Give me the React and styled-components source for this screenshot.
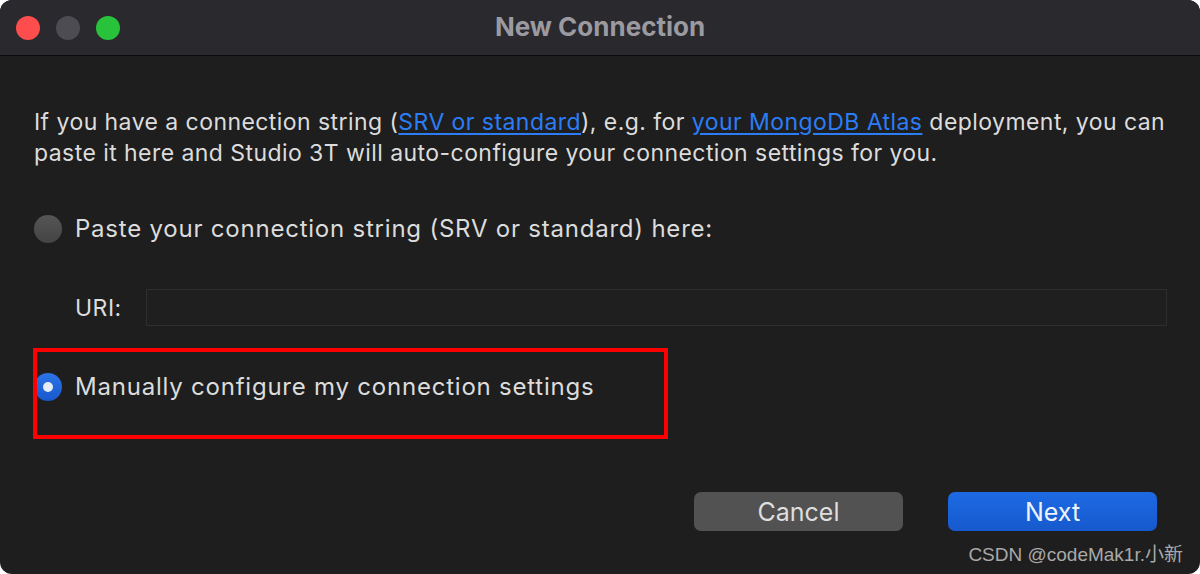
import React, { useState } from 'react'
import styled, { createGlobalStyle } from 'styled-components'

const GlobalStyle = createGlobalStyle`
  html, body { margin: 0; padding: 0; background: #ffffff; }
  body { font-family: Inter, "Noto Sans", sans-serif; }
`

const App = () => {
  const [mode, setMode] = useState('manual')

  return (
    <>
      <GlobalStyle />
      <Window>
        <TitleBar>
          <Lights>
            <Light color="#fe4d4d" />
            <Light color="#4d4c52" />
            <Light color="#29c23b" />
          </Lights>
          <Title>New Connection</Title>
        </TitleBar>
        <Body>
          <Intro>
            If you have a connection string (<Link href="#">SRV or standard</Link>), e.g. for{' '}
            <Link href="#">your MongoDB Atlas</Link> deployment, you can
            <br />
            paste it here and Studio 3T will auto-configure your connection settings for you.
          </Intro>

          <RadioRow $top={45} onClick={() => setMode('paste')}>
            <Radio checked={mode === 'paste'} />
            <RadioLabel>Paste your connection string (SRV or standard) here:</RadioLabel>
          </RadioRow>

          <UriRow>
            <UriLabel>URI:</UriLabel>
            <UriInput />
          </UriRow>

          <Highlight>
            <RadioRow onClick={() => setMode('manual')}>
              <Radio checked={mode === 'manual'} />
              <RadioLabel>Manually configure my connection settings</RadioLabel>
            </RadioRow>
          </Highlight>

          <Footer>
            <Button>Cancel</Button>
            <Button primary>Next</Button>
          </Footer>
          <Watermark>CSDN @codeMak1r.小新</Watermark>
        </Body>
      </Window>
    </>
  )
}

const Window = styled.div`
width: 1200px;
height: 574px;
border-radius: 12px;
overflow: hidden;
background: #1e1e1e;
display: flex;
flex-direction: column;
`
const TitleBar = styled.div`
height: 55px;
background: #2a292e;
border-bottom: 1px solid #0c0c0c;
display: flex;
align-items: center;
justify-content: center;
position: relative;
`
const Lights = styled.div`
position: absolute;
left: 16px;
top: 16px;
display: flex;
gap: 16px;
`
const Light = styled.span`
width: 24px;
height: 24px;
border-radius: 50%;
background: ${p => p.color};
`
const Title = styled.div`
font-size: 26px;
font-weight: 700;
color: #9b9aa0;
margin-top: -2px;
`
const Body = styled.div`
flex: 1;
padding: 0 33px 0 34px;
display: flex;
flex-direction: column;
`
const Intro = styled.p`
margin: 51px 0 0;
font-size: 23px;
line-height: 31px;
color: #dcdcdc;
letter-spacing: 0.44px;
white-space: nowrap;
`
const Link = styled.a`
color: #2b7df6;
text-decoration: underline;
text-underline-offset: 3px;
`
const RadioRow = styled.div`
display: flex;
align-items: center;
gap: 13px;
cursor: pointer;
margin-top: ${p => p.$top || 0}px;
`
const Radio = styled.span`
width: 28px;
height: 28px;
border-radius: 50%;
box-sizing: border-box;
flex-shrink: 0;
position: relative;
background: ${p => (p.checked ? 'linear-gradient(#2c74e6, #1858cc)' : 'linear-gradient(#555, #444)')};
&::after {
  content: '';
  display: ${p => (p.checked ? 'block' : 'none')};
  position: absolute;
  left: 9px;
  top: 9px;
  width: 10px;
  height: 10px;
  border-radius: 50%;
  background: #e6ecf6;
}
`
const RadioLabel = styled.span`
font-size: 24px;
letter-spacing: 0.78px;
color: #dcdcdc;
`
const UriRow = styled.div`
display: flex;
align-items: center;
margin: 46px 0 0 41px;
gap: 24px;
`
const UriLabel = styled.span`
font-size: 23px;
letter-spacing: 0.5px;
color: #dcdcdc;
`
const UriInput = styled.div`
flex: 1;
height: 35px;
border: 1px solid #2e2e2e;
background: #1f1f1f;
`
const Highlight = styled.div`
position: relative;
margin: 22px 0 0 -1px;
width: 635px;
height: 91px;
box-sizing: border-box;
padding: 24px 0 0 1px;
&::after {
  content: '';
  position: absolute;
  inset: 0;
  border: 4px solid #ff0000;
  pointer-events: none;
}
`
const Footer = styled.div`
display: flex;
justify-content: flex-end;
gap: 45px;
margin-top: 53px;
padding-right: 10px;
`
const Button = styled.button`
width: 209px;
height: 39px;
border: none;
border-radius: 7px;
font-family: Inter, "Noto Sans", sans-serif;
font-size: 25px;
color: ${p => (p.primary ? '#eef3fb' : '#dedede')};
background: ${p => (p.primary ? 'linear-gradient(#1d6ae4, #1659cc)' : '#525252')};
`
const Watermark = styled.div`
align-self: flex-end;
margin-top: 8px;
margin-right: -16px;
font-size: 19px;
color: #a9a9a9;
font-family: "Liberation Sans", "Noto Sans CJK SC", sans-serif;
`

export default App
